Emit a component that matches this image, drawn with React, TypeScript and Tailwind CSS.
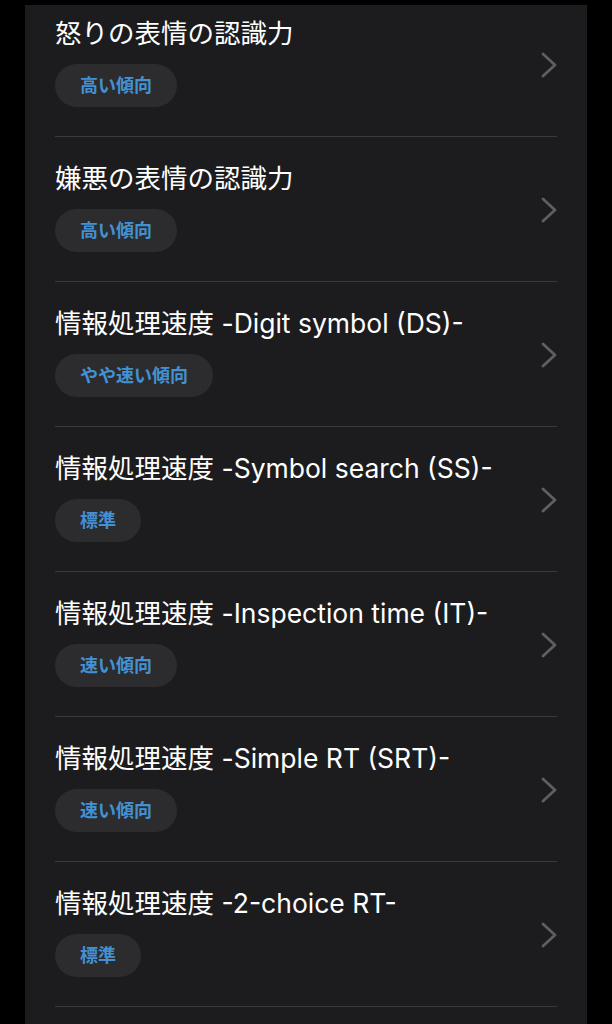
const ITEMS = [
  { title: "怒りの表情の認識力", tag: "高い傾向" },
  { title: "嫌悪の表情の認識力", tag: "高い傾向" },
  { title: "情報処理速度 -Digit symbol (DS)-", tag: "やや速い傾向" },
  { title: "情報処理速度 -Symbol search (SS)-", tag: "標準" },
  { title: "情報処理速度 -Inspection time (IT)-", tag: "速い傾向" },
  { title: "情報処理速度 -Simple RT (SRT)-", tag: "速い傾向" },
  { title: "情報処理速度 -2-choice RT-", tag: "標準" },
];

function Chevron() {
  return (
    <svg viewBox="0 0 16 26" className="h-[26px] w-[16px]" fill="none">
      <polyline
        points="2,2 14,13 2,24"
        stroke="#5f5f63"
        strokeWidth="2.8"
        strokeLinecap="round"
        strokeLinejoin="round"
      />
    </svg>
  );
}

export default function App() {
  return (
    <div
      className="h-[1024px] overflow-hidden bg-black pt-[5px]"
      style={{ fontFamily: '"Inter", "Noto Sans CJK JP", sans-serif' }}
    >
      <div className="mx-[25px] h-[1100px] overflow-hidden bg-[#1c1c1e]">
        <div className="-mt-[13px] px-[30px]">
          {ITEMS.map((item) => (
            <div key={item.title} className="border-b border-[#3a3a3c]">
              <div className="flex items-center justify-between pt-[25px] pb-[29px]">
                <div className="flex flex-col items-start gap-[15px]">
                  <div className="text-[26.5px] leading-[32px] text-white">
                    {item.title}
                  </div>
                  <span className="flex h-[43px] items-center rounded-full bg-[#2c2c2e] px-[25px] text-[18px] font-bold text-[#4391d3]">
                    {item.tag}
                  </span>
                </div>
                <div className="mt-[6px]">
                  <Chevron />
                </div>
              </div>
            </div>
          ))}
        </div>
      </div>
    </div>
  );
}
